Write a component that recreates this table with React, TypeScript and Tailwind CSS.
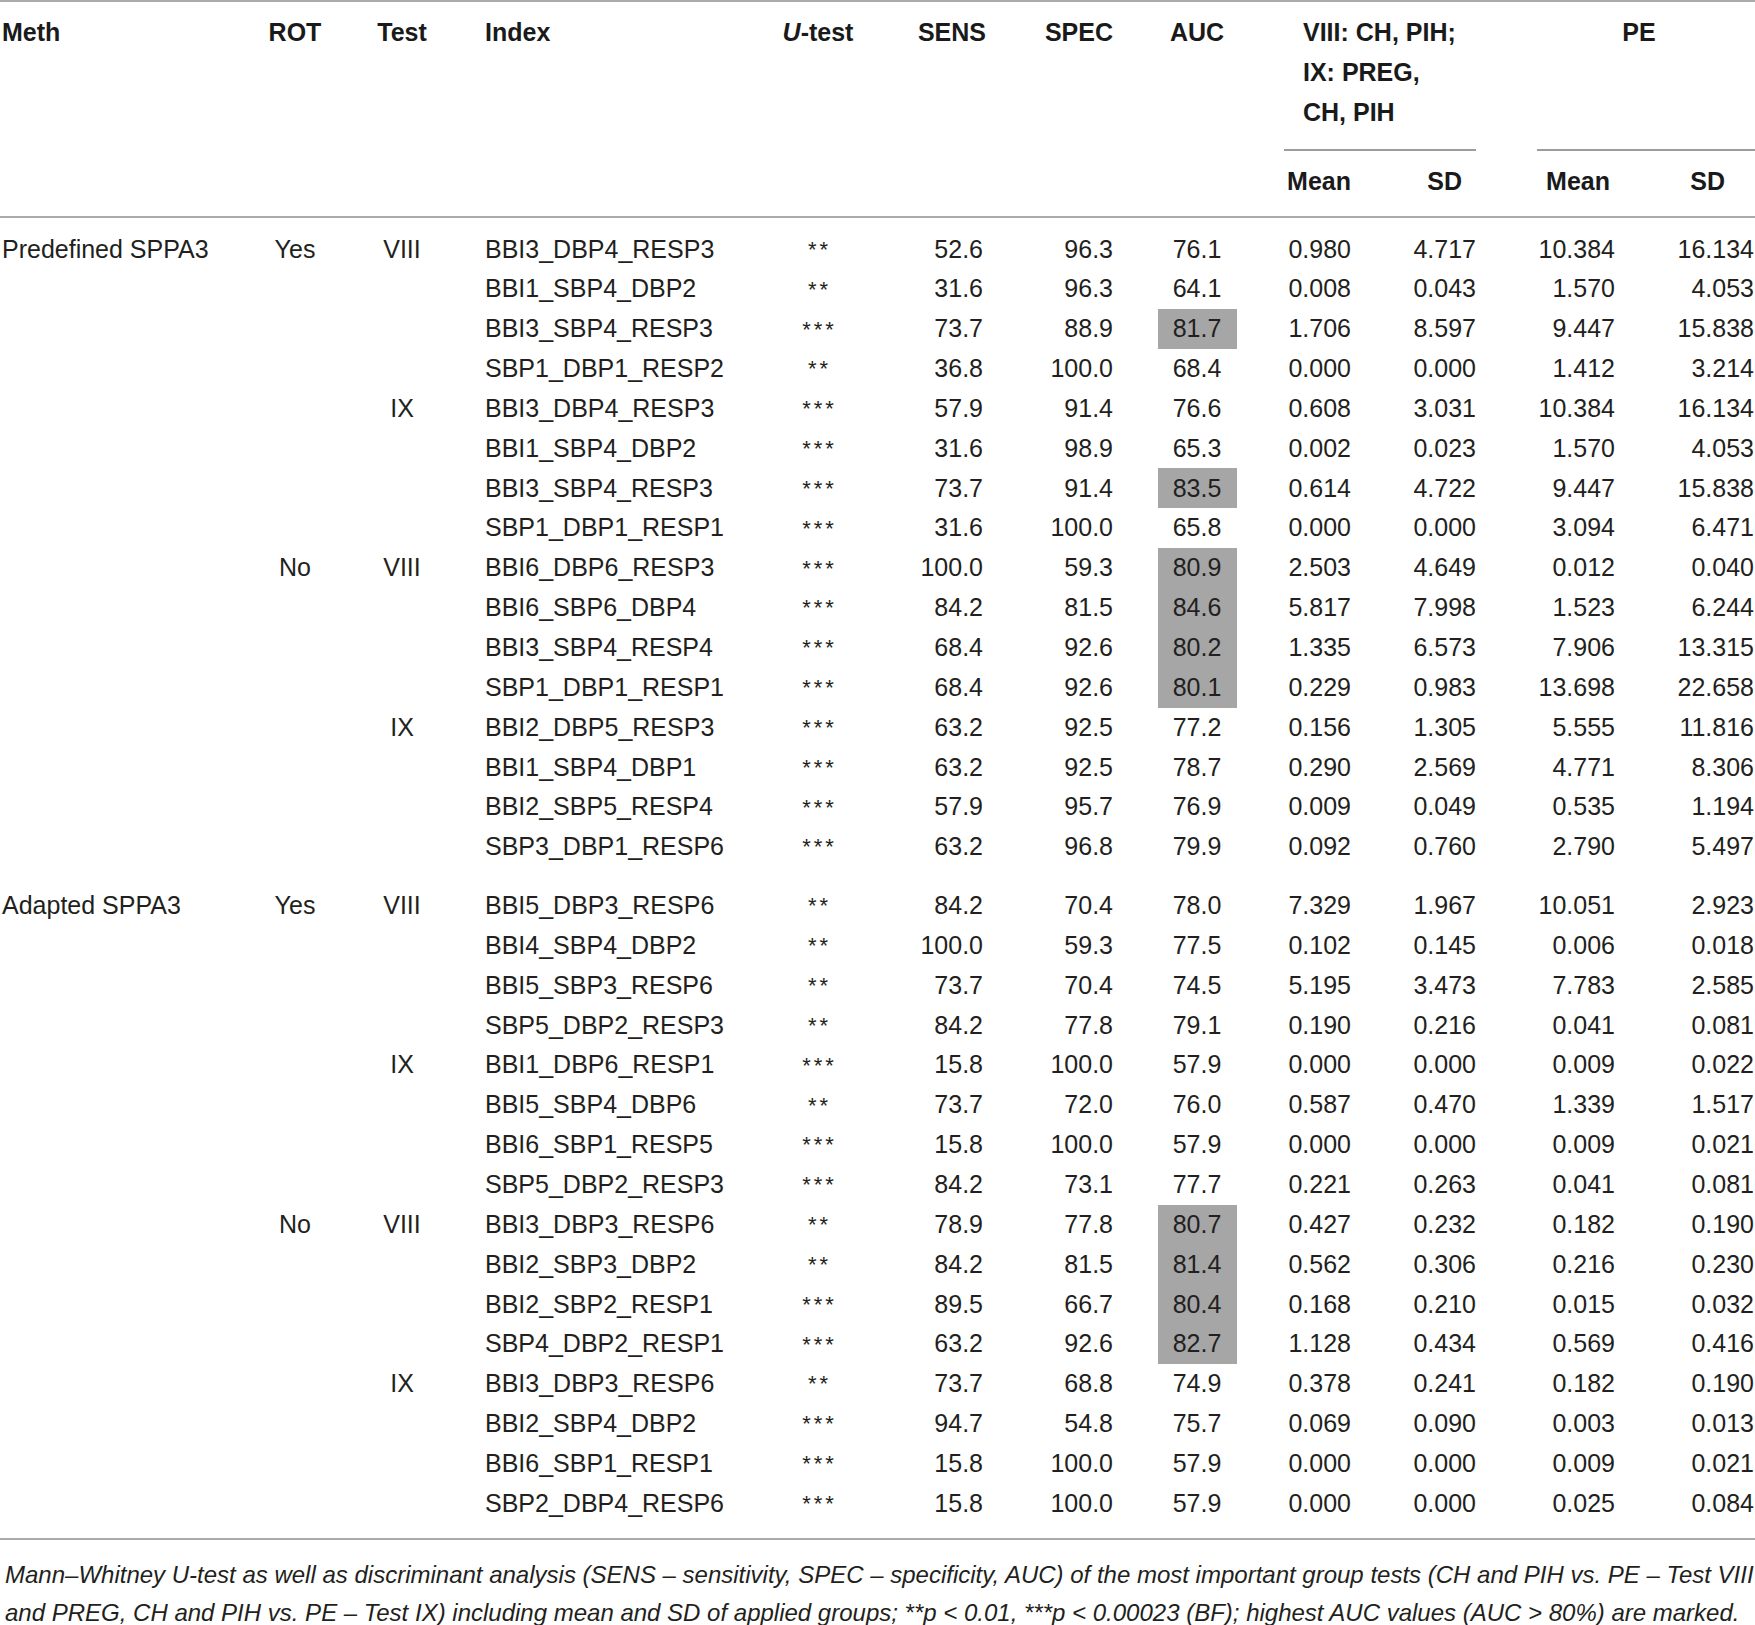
import React from 'react';

const cols =
  'grid grid-cols-[240px_110px_104px_286px_156px_90px_127px_168px_70px_125px_139px_140px]';

type Group = { rot?: string; test: string; rows: string[] };
type Section = { meth: string; groups: Group[] };

// index | u-test | sens | spec | auc (! = marked) | mean | sd | pe mean | pe sd
const sections: Section[] = [
  {
    meth: 'Predefined SPPA3',
    groups: [
      {
        rot: 'Yes',
        test: 'VIII',
        rows: [
          'BBI3_DBP4_RESP3|**|52.6|96.3|76.1|0.980|4.717|10.384|16.134',
          'BBI1_SBP4_DBP2|**|31.6|96.3|64.1|0.008|0.043|1.570|4.053',
          'BBI3_SBP4_RESP3|***|73.7|88.9|!81.7|1.706|8.597|9.447|15.838',
          'SBP1_DBP1_RESP2|**|36.8|100.0|68.4|0.000|0.000|1.412|3.214',
        ],
      },
      {
        test: 'IX',
        rows: [
          'BBI3_DBP4_RESP3|***|57.9|91.4|76.6|0.608|3.031|10.384|16.134',
          'BBI1_SBP4_DBP2|***|31.6|98.9|65.3|0.002|0.023|1.570|4.053',
          'BBI3_SBP4_RESP3|***|73.7|91.4|!83.5|0.614|4.722|9.447|15.838',
          'SBP1_DBP1_RESP1|***|31.6|100.0|65.8|0.000|0.000|3.094|6.471',
        ],
      },
      {
        rot: 'No',
        test: 'VIII',
        rows: [
          'BBI6_DBP6_RESP3|***|100.0|59.3|!80.9|2.503|4.649|0.012|0.040',
          'BBI6_SBP6_DBP4|***|84.2|81.5|!84.6|5.817|7.998|1.523|6.244',
          'BBI3_SBP4_RESP4|***|68.4|92.6|!80.2|1.335|6.573|7.906|13.315',
          'SBP1_DBP1_RESP1|***|68.4|92.6|!80.1|0.229|0.983|13.698|22.658',
        ],
      },
      {
        test: 'IX',
        rows: [
          'BBI2_DBP5_RESP3|***|63.2|92.5|77.2|0.156|1.305|5.555|11.816',
          'BBI1_SBP4_DBP1|***|63.2|92.5|78.7|0.290|2.569|4.771|8.306',
          'BBI2_SBP5_RESP4|***|57.9|95.7|76.9|0.009|0.049|0.535|1.194',
          'SBP3_DBP1_RESP6|***|63.2|96.8|79.9|0.092|0.760|2.790|5.497',
        ],
      },
    ],
  },
  {
    meth: 'Adapted SPPA3',
    groups: [
      {
        rot: 'Yes',
        test: 'VIII',
        rows: [
          'BBI5_DBP3_RESP6|**|84.2|70.4|78.0|7.329|1.967|10.051|2.923',
          'BBI4_SBP4_DBP2|**|100.0|59.3|77.5|0.102|0.145|0.006|0.018',
          'BBI5_SBP3_RESP6|**|73.7|70.4|74.5|5.195|3.473|7.783|2.585',
          'SBP5_DBP2_RESP3|**|84.2|77.8|79.1|0.190|0.216|0.041|0.081',
        ],
      },
      {
        test: 'IX',
        rows: [
          'BBI1_DBP6_RESP1|***|15.8|100.0|57.9|0.000|0.000|0.009|0.022',
          'BBI5_SBP4_DBP6|**|73.7|72.0|76.0|0.587|0.470|1.339|1.517',
          'BBI6_SBP1_RESP5|***|15.8|100.0|57.9|0.000|0.000|0.009|0.021',
          'SBP5_DBP2_RESP3|***|84.2|73.1|77.7|0.221|0.263|0.041|0.081',
        ],
      },
      {
        rot: 'No',
        test: 'VIII',
        rows: [
          'BBI3_DBP3_RESP6|**|78.9|77.8|!80.7|0.427|0.232|0.182|0.190',
          'BBI2_SBP3_DBP2|**|84.2|81.5|!81.4|0.562|0.306|0.216|0.230',
          'BBI2_SBP2_RESP1|***|89.5|66.7|!80.4|0.168|0.210|0.015|0.032',
          'SBP4_DBP2_RESP1|***|63.2|92.6|!82.7|1.128|0.434|0.569|0.416',
        ],
      },
      {
        test: 'IX',
        rows: [
          'BBI3_DBP3_RESP6|**|73.7|68.8|74.9|0.378|0.241|0.182|0.190',
          'BBI2_SBP4_DBP2|***|94.7|54.8|75.7|0.069|0.090|0.003|0.013',
          'BBI6_SBP1_RESP1|***|15.8|100.0|57.9|0.000|0.000|0.009|0.021',
          'SBP2_DBP4_RESP6|***|15.8|100.0|57.9|0.000|0.000|0.025|0.084',
        ],
      },
    ],
  },
];

const DataRow: React.FC<{ line: string; meth?: string; rot?: string; test?: string }> = ({
  line,
  meth,
  rot,
  test,
}) => {
  const [idx, u, sens, spec, aucRaw, m1, s1, m2, s2] = line.split('|');
  const marked = aucRaw.startsWith('!');
  const auc = marked ? aucRaw.slice(1) : aucRaw;

  return (
    <div className={`${cols} h-[39.85px]`}>
      <div className="flex items-center pl-[2px] whitespace-nowrap">{meth}</div>
      <div className="flex items-center justify-center">{rot}</div>
      <div className="flex items-center justify-center">{test}</div>
      <div className="flex items-center pl-[31px]">{idx}</div>
      <div className="flex items-center justify-center text-[22px] tracking-[3px] pl-[3px]">{u}</div>
      <div className="flex items-center justify-end pr-[3px]">{sens}</div>
      <div className="flex items-center justify-end">{spec}</div>
      <div className="flex items-stretch justify-center">
        <div
          className={`flex w-[79px] items-center justify-center ${marked ? 'bg-[#a6a6a6]' : ''}`}
        >
          {auc}
        </div>
      </div>
      <div className="flex items-center justify-end">{m1}</div>
      <div className="flex items-center justify-end">{s1}</div>
      <div className="flex items-center justify-end">{m2}</div>
      <div className="flex items-center justify-end pr-[1px]">{s2}</div>
    </div>
  );
};

const App: React.FC = () => {
  return (
    <div className="w-[1755px] bg-white font-['Liberation_Sans',Arial,sans-serif] text-[25px] text-[#231f20]">
      {/* Header */}
      <div className="border-t-2 border-b-2 border-[#ababab] pt-[11px] pb-[15px]">
        <div className={`${cols} font-bold leading-[39.85px] text-[#1a1a1a]`}>
          <div className="row-span-2 pl-[2px]">Meth</div>
          <div className="row-span-2 text-center">ROT</div>
          <div className="row-span-2 text-center">Test</div>
          <div className="row-span-2 pl-[31px]">Index</div>
          <div className="row-span-2 text-center">
            <span className="italic">U</span>-test
          </div>
          <div className="row-span-2 text-right">SENS</div>
          <div className="row-span-2 text-right">SPEC</div>
          <div className="row-span-2 text-center">AUC</div>
          <div className="col-span-2">
            <div className="pl-[22px]">
              VIII: CH, PIH;
              <br />
              IX: PREG,
              <br />
              CH, PIH
            </div>
            <div className="ml-[3px] mt-[16.5px] h-[1.5px] bg-[#9c9c9c]" />
          </div>
          <div className="col-span-2">
            <div className="h-[119.55px] pl-[61px] pr-[14px] text-center">PE</div>
            <div className="ml-[61px] mt-[16.5px] h-[1.5px] bg-[#9c9c9c]" />
          </div>
          <div className="pt-[11px] text-right">Mean</div>
          <div className="pt-[11px] pr-[14px] text-right">SD</div>
          <div className="pt-[11px] pr-[5px] text-right">Mean</div>
          <div className="pt-[11px] pr-[30px] text-right">SD</div>
        </div>
      </div>

      {/* Body */}
      <div className="border-b-2 border-[#ababab] pt-[11px] pb-[15px]">
        {sections.map((section, si) => (
          <div key={si} className={si > 0 ? 'mt-[19px]' : ''}>
            {section.groups.map((group, gi) =>
              group.rows.map((line, ri) => (
                <DataRow
                  key={`${gi}-${ri}`}
                  line={line}
                  meth={gi === 0 && ri === 0 ? section.meth : undefined}
                  rot={ri === 0 ? group.rot : undefined}
                  test={ri === 0 ? group.test : undefined}
                />
              )),
            )}
          </div>
        ))}
      </div>

      {/* Caption */}
      <div className="pt-[16px] pl-[5px] text-[24px] italic leading-[38px] whitespace-nowrap">
        Mann–Whitney U-test as well as discriminant analysis (SENS – sensitivity, SPEC – specificity,
        AUC) of the most important group tests (CH and PIH vs. PE – Test VIII
        <br />
        and PREG, CH and PIH vs. PE – Test IX) including mean and SD of applied groups; **p &lt; 0.01,
        ***p &lt; 0.00023 (BF); highest AUC values (AUC &gt; 80%) are marked.
      </div>
    </div>
  );
};

export default App;
